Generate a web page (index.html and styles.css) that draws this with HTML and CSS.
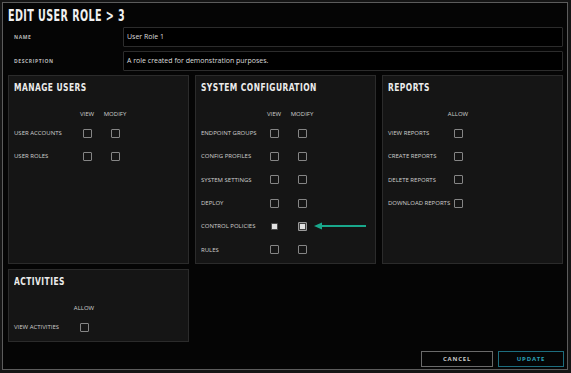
FILE: index.html
```html
<!DOCTYPE html>
<html>
<head>
<meta charset="utf-8">
<link rel="stylesheet" href="styles.css">
</head>
<body>
<div class="modal">
  <h1 class="title">EDIT USER ROLE &gt; 3</h1>
  <div class="field"><span class="field-label">NAME</span><div class="input">User Role 1</div></div>
  <div class="field"><span class="field-label">DESCRIPTION</span><div class="input">A role created for demonstration purposes.</div></div>

  <div class="panels">
    <section class="panel">
      <h2 class="panel-title">MANAGE USERS</h2>
      <div class="perm">
        <span></span><span class="col-h">VIEW</span><span class="col-h">MODIFY</span>
        <span class="row-l">USER ACCOUNTS</span><span class="cell"><i class="cb"></i></span><span class="cell"><i class="cb"></i></span>
        <span class="row-l">USER ROLES</span><span class="cell"><i class="cb"></i></span><span class="cell"><i class="cb"></i></span>
      </div>
    </section>

    <section class="panel">
      <h2 class="panel-title">SYSTEM CONFIGURATION</h2>
      <div class="perm">
        <span></span><span class="col-h">VIEW</span><span class="col-h">MODIFY</span>
        <span class="row-l">ENDPOINT GROUPS</span><span class="cell"><i class="cb"></i></span><span class="cell"><i class="cb"></i></span>
        <span class="row-l">CONFIG PROFILES</span><span class="cell"><i class="cb"></i></span><span class="cell"><i class="cb"></i></span>
        <span class="row-l">SYSTEM SETTINGS</span><span class="cell"><i class="cb"></i></span><span class="cell"><i class="cb"></i></span>
        <span class="row-l">DEPLOY</span><span class="cell"><i class="cb"></i></span><span class="cell"><i class="cb"></i></span>
        <span class="row-l">CONTROL POLICIES</span><span class="cell"><i class="cb cb-checked"></i></span><span class="cell"><i class="cb cb-focus"></i></span>
        <span class="row-l">RULES</span><span class="cell"><i class="cb"></i></span><span class="cell"><i class="cb"></i></span>
      </div>
    </section>

    <section class="panel">
      <h2 class="panel-title">REPORTS</h2>
      <div class="perm perm-single">
        <span></span><span class="col-h">ALLOW</span>
        <span class="row-l">VIEW REPORTS</span><span class="cell"><i class="cb"></i></span>
        <span class="row-l">CREATE REPORTS</span><span class="cell"><i class="cb"></i></span>
        <span class="row-l">DELETE REPORTS</span><span class="cell"><i class="cb"></i></span>
        <span class="row-l">DOWNLOAD REPORTS</span><span class="cell"><i class="cb"></i></span>
      </div>
    </section>

    <section class="panel panel-activities">
      <h2 class="panel-title">ACTIVITIES</h2>
      <div class="perm perm-single">
        <span></span><span class="col-h">ALLOW</span>
        <span class="row-l">VIEW ACTIVITIES</span><span class="cell"><i class="cb"></i></span>
      </div>
    </section>
  </div>

  <div class="actions">
    <button class="btn btn-cancel">CANCEL</button>
    <button class="btn btn-update">UPDATE</button>
  </div>

  <svg class="arrow" width="60" height="14" viewBox="0 0 60 14">
    <polygon points="2,7 10,3.5 10,10.5" fill="#19a88c"/>
    <rect x="9" y="6" width="45" height="2" fill="#19a88c"/>
  </svg>
</div>
</body>
</html>
```

FILE: styles.css
```css
html, body {
  margin: 0;
  padding: 0;
  background: #151515;
  width: 571px;
  height: 373px;
  overflow: hidden;
}

.modal {
  position: relative;
  box-sizing: border-box;
  margin: 2px 0 0 2px;
  width: 566px;
  height: 368px;
  border: 1px solid #5c5c5c;
  background: #050505;
  padding: 0 4px 0 5px;
  font-family: "Open Sans", "Noto Sans", sans-serif;
  color: #d0d0d0;
}

.title {
  margin: 4px 0 2px 0;
  font-family: "DejaVu Sans Condensed", "DejaVu Sans", sans-serif;
  font-weight: bold;
  font-size: 15px;
  line-height: 18px;
  color: #f0f0f0;
  letter-spacing: 0.6px;
  transform: scaleX(0.71);
  transform-origin: left center;
}

.field {
  display: grid;
  grid-template-columns: 115px 1fr;
  align-items: center;
  height: 20px;
  margin-bottom: 4px;
}

.field-label {
  padding-left: 6px;
  font-size: 5px;
  font-weight: 700;
  letter-spacing: 0.6px;
  color: #b8b8b8;
}

.input {
  box-sizing: border-box;
  height: 20px;
  border: 1px solid #2c2c2c;
  border-radius: 1px;
  background: #000;
  padding: 0 3px;
  font-size: 7px;
  line-height: 18px;
  color: #dcdcdc;
}

.panels {
  display: grid;
  grid-template-columns: repeat(3, 1fr);
  grid-template-rows: 189px auto;
  column-gap: 6px;
  row-gap: 5px;
}

.panel {
  box-sizing: border-box;
  border: 1px solid #2b2b2b;
  background: #151515;
  padding: 5px 5px 2px 5px;
}

.panel-title {
  margin: 0;
  font-family: "DejaVu Sans Condensed", "DejaVu Sans", sans-serif;
  font-weight: bold;
  font-size: 11px;
  line-height: 14px;
  letter-spacing: 0.6px;
  color: #ececec;
  transform: scaleX(0.76);
  transform-origin: left center;
}

.perm {
  display: grid;
  grid-template-columns: 59px 28px 28px;
  grid-template-rows: 15px;
  grid-auto-rows: 23.33px;
  align-items: center;
  margin-top: 11.5px;
}

.perm-single {
  grid-template-columns: 56px 28px;
}

.col-h {
  text-align: center;
  font-size: 6px;
  color: #cfcfcf;
}

.row-l {
  font-size: 6px;
  white-space: nowrap;
  color: #cfcfcf;
}

.cell {
  display: flex;
  justify-content: center;
  align-items: center;
}

.cb {
  display: block;
  box-sizing: border-box;
  width: 9px;
  height: 9px;
  border: 1px solid #858585;
  border-radius: 1px;
}

.cb-checked {
  width: 7px;
  height: 7px;
  border: 1px solid #4a4a4a;
  background: #e2e2e2;
}

.cb-focus {
  border: 1px solid #9a9a9a;
  background: #e2e2e2;
  box-shadow: inset 0 0 0 1px #3e3e3e;
}

.actions {
  display: flex;
  justify-content: flex-end;
  gap: 5px;
  margin-top: 9px;
  margin-right: -1px;
}

.btn {
  box-sizing: border-box;
  height: 16px;
  padding: 0;
  background: #050505;
  font-family: "Open Sans", "Noto Sans", sans-serif;
  font-size: 6px;
  font-weight: 700;
  letter-spacing: 0.8px;
  cursor: pointer;
}

.btn-cancel {
  width: 72px;
  border: 1px solid #6a6a6a;
  color: #c8c8c8;
}

.btn-update {
  width: 66px;
  border: 1px solid #1d6d7e;
  color: #2aa0b8;
}

.arrow {
  position: absolute;
  left: 309px;
  top: 216px;
}
```
